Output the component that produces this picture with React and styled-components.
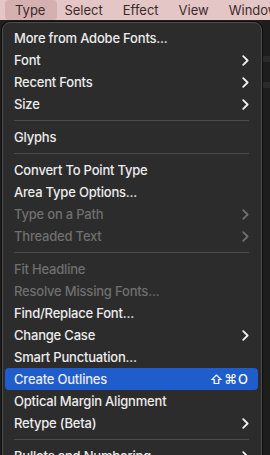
import React from "react";
import styled, { createGlobalStyle } from "styled-components";

const Global = createGlobalStyle`
  html, body { margin: 0; padding: 0; background: #1e1e1e; }
  body { width: 270px; height: 455px; overflow: hidden; }
  * { box-sizing: border-box; }
`;

const Page = styled.div`
  width: 270px;
  height: 455px;
  display: flex;
  flex-direction: column;
  background: #1f1f1f;
  font-family: Inter, "Liberation Sans", sans-serif;
  overflow: hidden;
`;

const MenuBar = styled.div`
  height: 20px;
  flex: none;
  display: flex;
  align-items: stretch;
  background: #e5c6c6;
  padding-left: 5px;
`;

const BarItem = styled.div`
  display: flex;
  align-items: center;
  padding: ${(p) => (p.$active ? "0 12px 0 10px" : "0 10px")};
  margin-right: ${(p) => (p.$active ? "-3px" : "0")};
  border-radius: 4px;
  background: ${(p) => (p.$active ? "#d5b0b0" : "transparent")};
  color: #3b2a2a;
  font-size: 13px;
  font-weight: 400;
  white-space: nowrap;
`;

const Workspace = styled.div`
  flex: 1;
  display: flex;
  align-items: flex-start;
  min-height: 0;
`;

const Menu = styled.div`
  flex: none;
  width: 260px;
  margin: 2px 0 0 2px;
  padding: 4px 3px 4px 2px;
  background: #2c2c2c;
  border: 1px solid #4e4e4e;
  border-radius: 8px 8px 0 0;
  box-shadow: 0 0 0 1px #0c0c0c;
`;

const Side = styled.div`
  flex: 1;
  align-self: stretch;
  display: flex;
  flex-direction: column;
  background: #1d1d1d;
  margin-left: 1px;
`;

const SideBand = styled.div`
  height: ${(p) => p.$h}px;
  background: ${(p) => p.$bg};
`;

const Item = styled.div`
  height: 22px;
  display: flex;
  align-items: center;
  justify-content: space-between;
  padding: 0 9px;
  border-radius: 4px;
  background: ${(p) => (p.$active ? "#1f5ccc" : "transparent")};
  color: ${(p) => (p.$disabled ? "#6f6f6f" : "#ececec")};
  font-size: 13px;
  font-weight: 500;
  letter-spacing: -0.2px;
  white-space: nowrap;
`;

const Shortcut = styled.span`
  color: #ffffff;
  font-size: 13px;
  letter-spacing: 1px;
`;

const Separator = styled.div`
  height: 11px;
  display: flex;
  align-items: center;
  padding: 0 9px;
  &::after {
    content: "";
    flex: 1;
    height: 1px;
    background: #4a4a4a;
  }
`;

const Chevron = ({ dim }) => (
  <svg width="7" height="11" viewBox="0 0 7 11">
    <polyline
      points="1.2,1.2 5.6,5.5 1.2,9.8"
      fill="none"
      stroke={dim ? "#6f6f6f" : "#f2f2f2"}
      strokeWidth="1.8"
      strokeLinecap="round"
      strokeLinejoin="round"
    />
  </svg>
);

const entries = [
  { label: "More from Adobe Fonts..." },
  { label: "Font", sub: true },
  { label: "Recent Fonts", sub: true },
  { label: "Size", sub: true },
  { sep: true },
  { label: "Glyphs" },
  { sep: true },
  { label: "Convert To Point Type" },
  { label: "Area Type Options..." },
  { label: "Type on a Path", sub: true, disabled: true },
  { label: "Threaded Text", sub: true, disabled: true },
  { sep: true },
  { label: "Fit Headline", disabled: true },
  { label: "Resolve Missing Fonts...", disabled: true },
  { label: "Find/Replace Font..." },
  { label: "Change Case", sub: true },
  { label: "Smart Punctuation..." },
  { label: "Create Outlines", active: true, shortcut: "⇧⌘O" },
  { label: "Optical Margin Alignment" },
  { label: "Retype (Beta)", sub: true },
  { sep: true },
  { label: "Bullets and Numbering", sub: true },
];

export default function App() {
  return (
    <Page>
      <Global />
      <MenuBar>
        <BarItem $active>Type</BarItem>
        <BarItem>Select</BarItem>
        <BarItem>Effect</BarItem>
        <BarItem>View</BarItem>
        <BarItem>Window</BarItem>
      </MenuBar>
      <Workspace>
        <Menu>
          {entries.map((e, i) =>
            e.sep ? (
              <Separator key={i} />
            ) : (
              <Item key={i} $active={e.active} $disabled={e.disabled}>
                <span>{e.label}</span>
                {e.shortcut ? (
                  <Shortcut>{e.shortcut}</Shortcut>
                ) : e.sub ? (
                  <Chevron dim={e.disabled} />
                ) : null}
              </Item>
            )
          )}
        </Menu>
        <Side>
          <SideBand $h={36} $bg="#1d1d1d" />
          <SideBand $h={6} $bg="#2a2a2a" />
          <SideBand $h={20} $bg="#1d1d1d" />
          <SideBand $h={6} $bg="#2a2a2a" />
        </Side>
      </Workspace>
    </Page>
  );
}
